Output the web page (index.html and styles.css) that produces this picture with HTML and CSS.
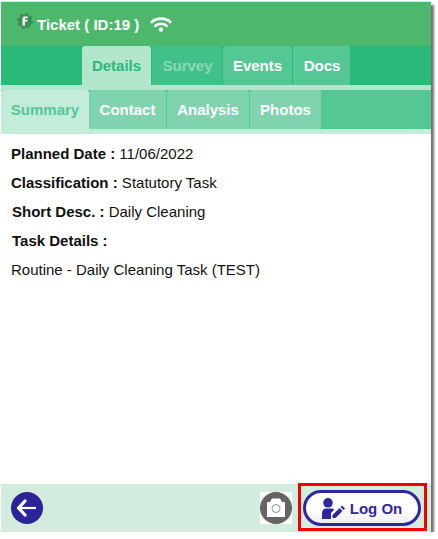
FILE: index.html
```html
<!DOCTYPE html>
<html lang="en">

<head>
    <meta charset="UTF-8">
    <title>Ticket</title>
    <link rel="stylesheet" href="styles.css">
</head>

<body>
    <div class="app">
        <div class="title-bar">
            <svg class="logo" width="16" height="16" viewBox="0 0 16 16">
                <circle cx="8" cy="8" r="6.600" fill="#3a8f58"/>
                <circle cx="8" cy="8" r="7" fill="none" stroke="#3a8f58" stroke-width="2" stroke-dasharray="3 2.500"/>
                <path d="M5.500 12.500V5.500c0-1.200.8-2 2-2h3.300v1.800H7.800v1.500h2.600v1.700H7.800v4.500z" fill="#fff"/>
            </svg>
            <span class="title-text">Ticket ( ID:19 )</span>
            <svg class="wifi" width="22" height="16" viewBox="0 0 22 16">
                <path d="M1.800 6C6.500 1.500 15.500 1.500 20.200 6M5.500 9.800c3.200-2.800 7.800-2.800 11 0" fill="none" stroke="#fff" stroke-width="2.600" stroke-linecap="round"/>
                <circle cx="11" cy="13.500" r="2.200" fill="#fff"/>
            </svg>
        </div>

        <div class="tabs">
            <a class="tab tab-active">Details</a>
            <a class="tab tab-disabled">Survey</a>
            <a class="tab tab-events">Events</a>
            <a class="tab tab-docs">Docs</a>
        </div>

        <div class="subtabs">
            <a class="subtab subtab-active">Summary</a>
            <a class="subtab subtab-contact">Contact</a>
            <a class="subtab subtab-analysis">Analysis</a>
            <a class="subtab subtab-photos">Photos</a>
        </div>

        <div class="details">
            <p class="line"><b>Planned Date :</b> 11/06/2022</p>
            <p class="line"><b>Classification :</b> Statutory Task</p>
            <p class="line line-nudge"><b>Short Desc. :</b> Daily Cleaning</p>
            <p class="line line-nudge"><b>Task Details :</b></p>
            <p class="line">Routine - Daily Cleaning Task (TEST)</p>
        </div>

        <div class="footer">
            <button class="back-button" type="button" aria-label="Back">
                <svg width="32" height="32" viewBox="0 0 32 32">
                    <circle cx="16" cy="16" r="16" fill="#2b2398"/>
                    <path d="M14 9l-6.500 7 6.500 7" fill="none" stroke="#fff" stroke-width="3.200" stroke-linecap="round" stroke-linejoin="round"/>
                    <path d="M9 16h16" stroke="#fff" stroke-width="2.200"/>
                </svg>
            </button>
            <div class="footer-right">
                <div class="camera">
                    <svg width="32" height="32" viewBox="0 0 32 32">
                        <circle cx="16" cy="16" r="16" fill="#646464"/>
                        <path d="M7 10h3l2-3.500h8l2 3.500h3v15H7z" fill="#fff"/>
                        <circle cx="16" cy="16.500" r="4" fill="#fff" stroke="#8a8fb0" stroke-width="1"/>
                    </svg>
                </div>
                <button class="logon-button" type="button">
                    <svg width="23" height="21" viewBox="0 0 23 21">
                        <circle cx="6" cy="4.800" r="4.800" fill="#2e27a0"/>
                        <path d="M0 21v-6c0-3 2-4.500 4-4.500h5c1.500 0 2.500.5 3.200 1.200L9 15v6z" fill="#2e27a0"/>
                        <path d="M10.500 20v-3l7-7 3 3-7 7zM18.500 9l1.500-1.500 3 3-1.500 1.500z" fill="#2e27a0"/>
                    </svg>
                    <span>Log On</span>
                </button>
            </div>
        </div>

        <div class="highlight"></div>
    </div>
</body>

</html>
```

FILE: styles.css
```css
body {
    font-family: "Liberation Sans", Arial, sans-serif;
    background: #fff;
    margin: 0;
    padding: 2px 0 0 1px;
}

.app {
    position: relative;
    display: flex;
    flex-direction: column;
    width: 430px;
    height: 530px;
    background: #fff;
    box-shadow: 3px 3px 2px rgba(0, 0, 0, 0.55), 0 -1px 0 #e2e2e2;
}

.title-bar {
    display: flex;
    align-items: center;
    height: 44px;
    padding-left: 16px;
    background: #4db86c;
    color: #fff;
    font-size: 15px;
    font-weight: bold;
}

.logo {
    margin-right: 4px;
    margin-bottom: 6px;
}

.wifi {
    margin-left: 11px;
}

.tabs {
    display: flex;
    height: 39px;
    padding-left: 81px;
    background: #2ab978;
}

.tab {
    display: flex;
    align-items: center;
    justify-content: center;
    box-sizing: border-box;
    border-radius: 3px 3px 0 0;
    font-size: 15px;
    font-weight: bold;
    color: #fff;
    background: #54c795;
}

.tab-active {
    width: 69px;
    margin-right: 1px;
    background: #b2e6cd;
    color: #2fb67a;
}

.tab-disabled {
    width: 70px;
    margin-right: 1px;
    padding-left: 1px;
    background: #41c08a;
    color: #8bd8b5;
}

.tab-events {
    width: 69px;
    margin-right: 1px;
}

.tab-docs {
    width: 57px;
    padding-left: 1px;
}

.subtabs {
    display: flex;
    height: 39px;
    border-top: 5px solid #b2e6cd;
    border-bottom: 5px solid #c3ecd9;
    background: #54c795;
}

.subtab {
    display: flex;
    align-items: center;
    justify-content: center;
    margin-right: 1px;
    border-radius: 3px 3px 0 0;
    font-size: 15px;
    font-weight: bold;
    color: #fff;
    background: #7fd3ae;
}

.subtab-active {
    width: 88px;
    margin-right: 0;
    background: #c3ecd9;
    color: #54c795;
}

.subtab-contact {
    width: 77px;
}

.subtab-analysis {
    width: 82px;
}

.subtab-photos {
    width: 71px;
}

.details {
    flex: 1;
    padding: 10px 0 0 10px;
    font-size: 15px;
    color: #111;
}

.line {
    margin: 0;
    height: 29px;
    line-height: 20px;
}

.line-nudge {
    padding-left: 1px;
}

.footer {
    display: flex;
    align-items: center;
    justify-content: space-between;
    height: 48px;
    padding: 0 10px;
    background: #d4ecdd;
}

.back-button {
    display: flex;
    width: 32px;
    height: 32px;
    padding: 0;
    border: none;
    background: none;
}

.footer-right {
    display: flex;
    align-items: center;
    gap: 11px;
}

.camera {
    display: flex;
    background: #fff;
}

.logon-button {
    display: flex;
    align-items: center;
    justify-content: center;
    gap: 5px;
    width: 118px;
    height: 36px;
    padding: 0;
    border: 3px solid #2e27a0;
    border-radius: 18px;
    background: linear-gradient(#fff 60%, #eeeeee);
    color: #2e27a0;
    font-family: "Liberation Sans", Arial, sans-serif;
    font-size: 15px;
    font-weight: bold;
}

.highlight {
    position: absolute;
    right: 4px;
    bottom: 1px;
    width: 123px;
    height: 42px;
    border: 3px solid #f00000;
    pointer-events: none;
}
```
